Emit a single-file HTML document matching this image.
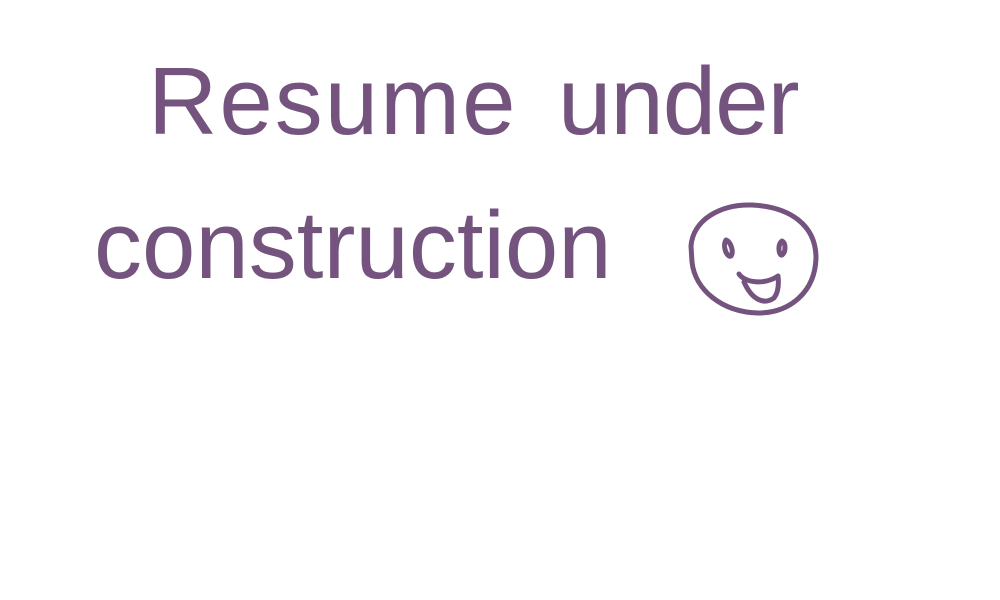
<!DOCTYPE html>
<html><head><meta charset="utf-8"><style>
html,body{margin:0;padding:0;background:#fff;width:1000px;height:600px;overflow:hidden}
.t{position:absolute;font-family:"Liberation Sans",sans-serif;color:#74547f;white-space:nowrap;line-height:1;font-weight:normal}
</style></head><body>
<div class="t" style="left:148px;top:54px;font-size:96px;letter-spacing:2px">Resume</div>
<div class="t" style="left:558px;top:54px;font-size:96px;letter-spacing:-1px">under</div>
<div class="t" style="left:94px;top:198px;font-size:96px;letter-spacing:0px">construction</div>
<svg style="position:absolute;left:0;top:0" width="1000" height="600" viewBox="0 0 1000 600">
<g fill="none" stroke="#74547f" stroke-width="5" stroke-linecap="round" stroke-linejoin="round">
<path d="M691 246 C693 220 720 204 752 205 C790 207 816 225 816 258 C815 292 790 313 758 313 C722 312 695 290 692 262 Z"/>
<path d="M726 240 C722 246 727 258 731 256 C734 252 731 242 726 240"/>
<path d="M782 241 C777 245 779 256 782 255 C786 252 786 243 782 241"/>
<path d="M739 274 C745 283 765 285 778 276 M744 282 C752 300 764 305 774 298 C778 293 779 285 778 276"/>
</g></svg>
</body></html>
